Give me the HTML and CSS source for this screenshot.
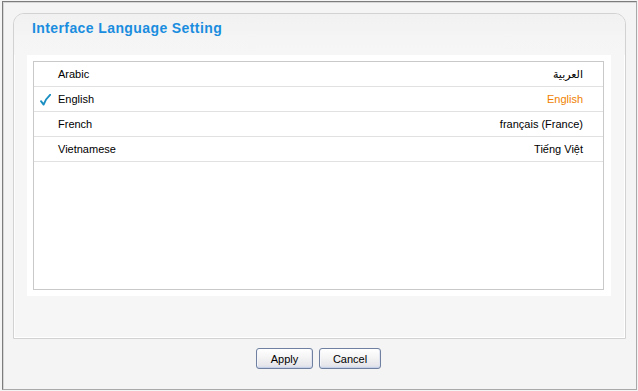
FILE: index.html
```html
<!DOCTYPE html>
<html lang="en">
<head>
<meta charset="utf-8">
<title>Interface Language Setting</title>
<link rel="stylesheet" href="styles.css">
</head>
<body>
<div class="frame">
  <div class="panel">
    <div class="panel-head">
      <h1 class="title">Interface Language Setting</h1>
    </div>
    <div class="sheet">
      <ul class="lang-list">
        <li class="lang-row">
          <span class="check"></span>
          <span class="lang-name">Arabic</span>
          <span class="lang-native arabic" dir="rtl">العربية</span>
        </li>
        <li class="lang-row selected">
          <span class="check"><svg width="11" height="12" viewBox="0 0 11 12"><path d="M1 7.2 L3.6 10.6 C5 7 7.2 3.4 10.4 0.6" fill="none" stroke="#1b8fc2" stroke-width="1.9" stroke-linecap="round" stroke-linejoin="round"/></svg></span>
          <span class="lang-name">English</span>
          <span class="lang-native">English</span>
        </li>
        <li class="lang-row">
          <span class="check"></span>
          <span class="lang-name">French</span>
          <span class="lang-native">français (France)</span>
        </li>
        <li class="lang-row">
          <span class="check"></span>
          <span class="lang-name">Vietnamese</span>
          <span class="lang-native">Tiếng Việt</span>
        </li>
      </ul>
    </div>
  </div>
  <div class="actions">
    <button class="btn btn-apply" type="button">Apply</button>
    <button class="btn btn-cancel" type="button">Cancel</button>
  </div>
</div>
</body>
</html>
```

FILE: styles.css
```css
* { box-sizing: border-box; }

html, body {
  margin: 0;
  padding: 0;
  background: #f4f4f4;
}

body {
  width: 638px;
  height: 391px;
  overflow: hidden;
  font-family: "Liberation Sans", "DejaVu Sans", Arial, sans-serif;
  font-size: 11px;
  color: #000;
}

.frame {
  margin: 1px 0 0 2px;
  width: 635px;
  height: 389px;
  background: #f4f4f4;
  border-top: 1px solid #7c7c7c;
  border-left: 1px solid #7c7c7c;
  border-right: 1px solid #a9a9a9;
  border-bottom: 1px solid #a9a9a9;
  box-shadow: inset 1px 1px 0 #d6d6d6;
  padding: 11px 0 0 10px;
}

.panel {
  width: 613px;
  height: 326px;
  border: 1px solid #d2d2d2;
  border-radius: 11px 11px 0 0;
  background: #f6f6f6;
  box-shadow: inset 1px 1px 0 #fdfdfd, inset -1px -1px 0 #ffffff;
  display: flex;
  flex-direction: column;
}

.panel-head {
  height: 41px;
  border-radius: 10px 10px 0 0;
  background: linear-gradient(#f1f1f1, #f5f5f5 60%, #f6f6f6);
  padding: 6px 0 0 18px;
}

.title {
  margin: 0;
  font-family: "Liberation Sans", Arial, sans-serif;
  font-size: 14px;
  font-weight: bold;
  letter-spacing: 0.4px;
  color: #1a8ddf;
  line-height: 17px;
}

.sheet {
  margin: 0 14px 0 13px;
  height: 241px;
  background: #fff;
  padding: 6px 7px 7px 6px;
}

.lang-list {
  list-style: none;
  margin: 0;
  padding: 0;
  height: 229px;
  border: 1px solid #c9c9c9;
  background: #fff;
}

.lang-row {
  display: flex;
  align-items: center;
  height: 25px;
  border-bottom: 1px solid #e1e1e1;
  padding: 0 20px 0 0;
}

.check {
  width: 24px;
  display: flex;
  justify-content: flex-end;
  padding-right: 7px;
  padding-top: 1px;
}

.check svg { display: block; }

.lang-name {
  flex: 1;
}

.lang-native {
  text-align: right;
}

.arabic {
  font-family: "DejaVu Sans", sans-serif;
  font-size: 11px;
}

.selected .lang-native {
  color: #f07f00;
}

.actions {
  display: flex;
  justify-content: center;
  gap: 6px;
  padding-top: 9px;
  padding-right: 12px;
}

.btn {
  height: 21px;
  padding: 0;
  font-family: "Liberation Sans", Arial, sans-serif;
  font-size: 11px;
  color: #000;
  border: 1px solid #6f80a0;
  border-radius: 3px;
  background: linear-gradient(#ffffff, #f4f4f4 45%, #e6e6ec 85%, #d8dce8);
  box-shadow: inset 0 -1px 0 #c6d0e8, inset 1px 0 0 #f4f6fb, inset -1px 0 0 #dfe4f0;
}

.btn-apply { width: 57px; }
.btn-cancel { width: 62px; }
```
